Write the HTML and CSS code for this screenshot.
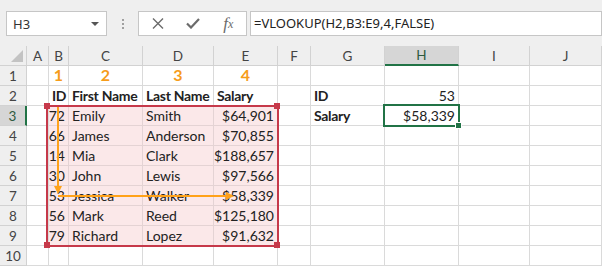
FILE: index.html
```html
<!DOCTYPE html>
<html lang="en">
<head>
    <meta charset="UTF-8">
    <title>VLOOKUP</title>
    <link rel="stylesheet" href="styles.css">
</head>
<body>
    <div class="toolbar">
        <div class="namebox">H3<span class="caret"></span></div>
        <div class="grip"><i></i><i></i><i></i></div>
        <div class="fx-buttons">
            <span class="btn">
                <svg width="12" height="11" viewBox="0 0 12 11"><path d="M1 0.5 L11 10.5 M11 0.5 L1 10.5" stroke="#6b6b6b" stroke-width="1.4" fill="none"/></svg>
            </span>
            <span class="btn">
                <svg width="14" height="11" viewBox="0 0 14 11"><path d="M1 5.5 L5 9.5 L13 1" stroke="#6b6b6b" stroke-width="2.2" fill="none"/></svg>
            </span>
            <span class="btn fx">f<sub>x</sub></span>
        </div>
        <div class="formula">=VLOOKUP(H2,B3:E9,4,FALSE)</div>
    </div>

    <div class="sheet">
        <div class="row head">
            <div class="corner"><span class="tri"></span></div>
            <div class="ch">A</div><div class="ch">B</div><div class="ch">C</div><div class="ch">D</div><div class="ch">E</div>
            <div class="ch">F</div><div class="ch">G</div><div class="ch active">H</div><div class="ch">I</div><div class="ch">J</div>
        </div>
        <div class="row">
            <div class="rh">1</div><div class="c"></div>
            <div class="c ctr idx">1</div><div class="c ctr idx">2</div><div class="c ctr idx">3</div><div class="c ctr idx">4</div>
            <div class="c"></div><div class="c"></div><div class="c"></div><div class="c"></div><div class="c"></div>
        </div>
        <div class="row">
            <div class="rh">2</div><div class="c"></div>
            <div class="c b">ID</div><div class="c b">First Name</div><div class="c b">Last Name</div><div class="c b">Salary</div>
            <div class="c"></div><div class="c b">ID</div><div class="c num">53</div><div class="c"></div><div class="c"></div>
        </div>
        <div class="row">
            <div class="rh active">3</div><div class="c"></div>
            <div class="c p num">72</div><div class="c p">Emily</div><div class="c p">Smith</div><div class="c p num">$64,901</div>
            <div class="c"></div><div class="c b">Salary</div><div class="c num">$58,339</div><div class="c"></div><div class="c"></div>
        </div>
        <div class="row">
            <div class="rh">4</div><div class="c"></div>
            <div class="c p num">66</div><div class="c p">James</div><div class="c p">Anderson</div><div class="c p num">$70,855</div>
            <div class="c"></div><div class="c"></div><div class="c"></div><div class="c"></div><div class="c"></div>
        </div>
        <div class="row">
            <div class="rh">5</div><div class="c"></div>
            <div class="c p num">14</div><div class="c p">Mia</div><div class="c p">Clark</div><div class="c p num">$188,657</div>
            <div class="c"></div><div class="c"></div><div class="c"></div><div class="c"></div><div class="c"></div>
        </div>
        <div class="row">
            <div class="rh">6</div><div class="c"></div>
            <div class="c p num">30</div><div class="c p">John</div><div class="c p">Lewis</div><div class="c p num">$97,566</div>
            <div class="c"></div><div class="c"></div><div class="c"></div><div class="c"></div><div class="c"></div>
        </div>
        <div class="row">
            <div class="rh">7</div><div class="c"></div>
            <div class="c p num">53</div><div class="c p">Jessica</div><div class="c p">Walker</div><div class="c p num">$58,339</div>
            <div class="c"></div><div class="c"></div><div class="c"></div><div class="c"></div><div class="c"></div>
        </div>
        <div class="row">
            <div class="rh">8</div><div class="c"></div>
            <div class="c p num">56</div><div class="c p">Mark</div><div class="c p">Reed</div><div class="c p num">$125,180</div>
            <div class="c"></div><div class="c"></div><div class="c"></div><div class="c"></div><div class="c"></div>
        </div>
        <div class="row">
            <div class="rh">9</div><div class="c"></div>
            <div class="c p num">79</div><div class="c p">Richard</div><div class="c p">Lopez</div><div class="c p num">$91,632</div>
            <div class="c"></div><div class="c"></div><div class="c"></div><div class="c"></div><div class="c"></div>
        </div>
        <div class="row">
            <div class="rh">10</div><div class="c"></div>
            <div class="c"></div><div class="c"></div><div class="c"></div><div class="c"></div>
            <div class="c"></div><div class="c"></div><div class="c"></div><div class="c"></div><div class="c"></div>
        </div>

        <!-- lookup range outline -->
        <div class="range"></div>
        <span class="knob k-tl"></span>
        <span class="knob k-tr"></span>
        <span class="knob k-bl"></span>
        <span class="knob k-br"></span>

        <!-- active cell -->
        <div class="selection"><span class="handle"></span></div>

        <svg class="arrows" width="602" height="220" viewBox="0 0 602 220">
            <g stroke="#ffa21a" stroke-width="2" fill="#ffa21a">
                <line x1="58" y1="61" x2="58" y2="142"/>
                <polygon points="54,140 62,140 58,148" stroke="none"/>
                <line x1="58" y1="150" x2="228" y2="150"/>
                <polygon points="226,146 226,154 234,150" stroke="none"/>
            </g>
        </svg>
    </div>
</body>
</html>
```

FILE: styles.css
```css
* {
    margin: 0;
    padding: 0;
    box-sizing: border-box;
}

body {
    width: 602px;
    height: 266px;
    background: #efefef;
    font-family: 'Lato', 'Liberation Sans', sans-serif;
    color: #222;
    overflow: hidden;
}

/* formula bar */
.toolbar {
    height: 46px;
    display: flex;
    align-items: flex-start;
    padding-top: 11px;
    padding-left: 6px;
    font-family: 'Noto Sans', 'Open Sans', sans-serif;
}

.namebox,
.fx-buttons,
.formula {
    height: 25px;
    background: #fff;
    border: 1px solid #c6c6c6;
}

.namebox {
    width: 101px;
    display: flex;
    align-items: center;
    justify-content: space-between;
    padding: 0 7px 0 6px;
    font-size: 13px;
    color: #333;
}

.caret {
    width: 0;
    height: 0;
    border-left: 4px solid transparent;
    border-right: 4px solid transparent;
    border-top: 4px solid #555;
}

.grip {
    width: 31px;
    height: 25px;
    display: flex;
    flex-direction: column;
    align-items: center;
    justify-content: center;
    gap: 2px;
}

.grip i {
    width: 2px;
    height: 2px;
    background: #a0a0a0;
}

.fx-buttons {
    width: 109px;
    display: flex;
    align-items: center;
    padding-left: 1px;
}

.btn {
    width: 36px;
    display: flex;
    justify-content: center;
    align-items: center;
}

.fx {
    font-family: 'Liberation Serif', serif;
    font-style: italic;
    font-size: 17px;
    color: #6b6b6b;
    line-height: 1;
}

.fx sub {
    font-size: 12px;
    vertical-align: -1px;
}

.formula {
    flex: 1;
    margin-left: 3px;
    padding-left: 3px;
    font-size: 13px;
    line-height: 23px;
    color: #222;
}

/* grid */
.sheet {
    position: relative;
    background: #fff;
}

.row {
    display: grid;
    grid-template-columns: 27px 22px 20px 74px 71px 64px 33px 74px 74px 71px 72px;
    height: 20px;
}

.row > div {
    border-right: 1px solid #dadada;
    border-bottom: 1px solid #dadada;
    display: flex;
    align-items: flex-end;
    white-space: nowrap;
    overflow: hidden;
}

.head > div {
    background: #efefef;
    border-color: #d2d2d2;
    justify-content: center;
    font-size: 13.5px;
    color: #444;
    padding-bottom: 1px;
}

.corner {
    position: relative;
}

.tri {
    position: absolute;
    right: 3px;
    bottom: 3px;
    width: 0;
    height: 0;
    border-left: 12px solid transparent;
    border-bottom: 12px solid #c3c3c3;
}

.head .active {
    background: #d6d6d6;
    border-bottom: 2px solid #217346;
    color: #2e5a3e;
}

.row > .rh {
    background: #efefef;
    border-color: #d2d2d2;
    justify-content: center;
    font-size: 13.5px;
    color: #444;
    padding-bottom: 1px;
}

.row > .rh.active {
    background: #d6d6d6;
    border-right: 2px solid #217346;
    color: #2e5a3e;
}

.c {
    font-size: 14px;
    padding: 0 3px 1px;
}

.num {
    justify-content: flex-end;
}

.ctr {
    justify-content: center;
}

.b {
    font-weight: 700;
    letter-spacing: -0.3px;
}

.idx {
    font-weight: 700;
    font-size: 16px;
    color: #f69c1a;
}

.row > .p {
    background: #fbe8e9;
    border-color: #e4d3d4;
}

/* overlays */
.range {
    position: absolute;
    left: 46px;
    top: 59px;
    width: 233px;
    height: 142px;
    border: 2px solid #c6394a;
}

.knob {
    position: absolute;
    width: 6px;
    height: 6px;
    background: #c6394a;
}

.k-tl { left: 44px; top: 57px; }
.k-tr { left: 274px; top: 57px; }
.k-bl { left: 44px; top: 196px; }
.k-br { left: 274px; top: 196px; }

.selection {
    position: absolute;
    left: 383px;
    top: 58px;
    width: 77px;
    height: 23px;
    border: 2px solid #217346;
}

.handle {
    position: absolute;
    right: -4px;
    bottom: -4px;
    width: 7px;
    height: 7px;
    background: #217346;
    border: 1px solid #fff;
}

.arrows {
    position: absolute;
    left: 0;
    top: 0;
    pointer-events: none;
}
```
